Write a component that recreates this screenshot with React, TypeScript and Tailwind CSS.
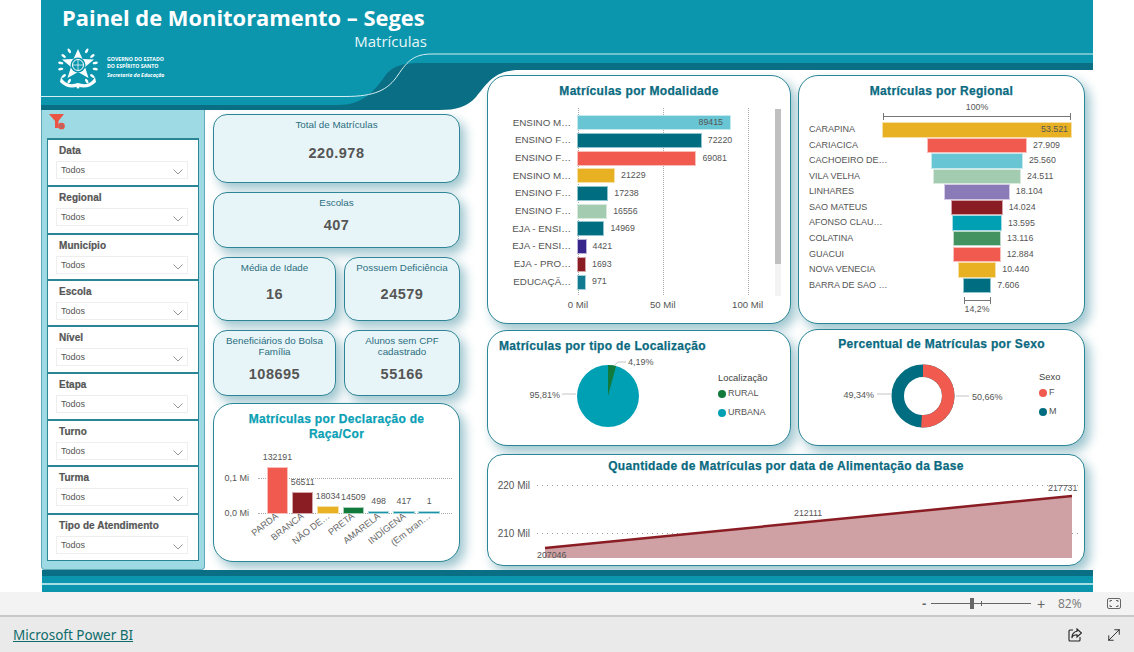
import { MoveDiagonal } from "lucide-react";

const slicers = [
  { label: "Data", height: "h-[47px]" },
  { label: "Regional", height: "h-[48px]" },
  { label: "Município", height: "h-[46px]" },
  { label: "Escola", height: "h-[46px]" },
  { label: "Nível", height: "h-[47px]" },
  { label: "Etapa", height: "h-[47px]" },
  { label: "Turno", height: "h-[46px]" },
  { label: "Turma", height: "h-[48px]" },
  { label: "Tipo de Atendimento", height: "h-[47px]" },
];

const teal = "bg-[#006d80] ring-[#8fc3cd]";
const coral = "bg-[#f05a4f] ring-[#f9c0bb]";
const gold = "bg-[#e8b124] ring-[#f6e0a6]";
const sky = "bg-[#68c5d3] ring-[#c5e9ee]";
const sage = "bg-[#a2cbaf] ring-[#d8eade]";
const wine = "bg-[#8a1c24] ring-[#d3a5a8]";

const modalidades = [
  { label: "ENSINO M…", value: 89415, color: sky, inside: true },
  { label: "ENSINO F…", value: 72220, color: teal },
  { label: "ENSINO F…", value: 69081, color: coral },
  { label: "ENSINO M…", value: 21229, color: gold },
  { label: "ENSINO F…", value: 17238, color: teal },
  { label: "ENSINO F…", value: 16556, color: sage },
  { label: "EJA - ENSI…", value: 14969, color: teal },
  { label: "EJA - ENSI…", value: 4421, color: "bg-[#38268a] ring-[#b9b2da]" },
  { label: "EJA - PRO…", value: 1693, color: wine },
  { label: "EDUCAÇÃ…", value: 971, color: "bg-[#127a90] ring-[#a5d0d9]" },
];

const regionais = [
  { label: "CARAPINA", value: 53521, text: "53.521", color: gold, inside: true },
  { label: "CARIACICA", value: 27909, text: "27.909", color: coral },
  { label: "CACHOEIRO DE…", value: 25560, text: "25.560", color: sky },
  { label: "VILA VELHA", value: 24511, text: "24.511", color: sage },
  { label: "LINHARES", value: 18104, text: "18.104", color: "bg-[#8a7ab8] ring-[#d3cde5]" },
  { label: "SAO MATEUS", value: 14024, text: "14.024", color: wine },
  { label: "AFONSO CLAU…", value: 13595, text: "13.595", color: "bg-[#00a0b4] ring-[#a6dde4]" },
  { label: "COLATINA", value: 13116, text: "13.116", color: "bg-[#439360] ring-[#bcdac7]" },
  { label: "GUACUI", value: 12884, text: "12.884", color: coral },
  { label: "NOVA VENECIA", value: 10440, text: "10.440", color: gold },
  { label: "BARRA DE SAO …", value: 7606, text: "7.606", color: teal },
];

const racas = [
  { label: "PARDA", value: 132191, height: 45, color: coral },
  { label: "BRANCA", value: 56511, height: 20, color: wine },
  { label: "NÃO DE…", value: 18034, height: 6.5, color: gold },
  { label: "PRETA", value: 14509, height: 5, color: "bg-[#127a3a] ring-[#a9d0b6]" },
  { label: "AMARELA", value: 498, height: 1, color: "bg-[#1a93a8] ring-[#a6d7df]" },
  { label: "INDÍGENA", value: 417, height: 1, color: "bg-[#1a93a8] ring-[#a6d7df]" },
  { label: "(Em bran…", value: 1, height: 1, color: "bg-[#1a93a8] ring-[#a6d7df]" },
];

const cardShadow = "shadow-[5px_6px_11px_rgba(10,111,133,0.4)]";
const titleClass = "font-bold text-[12px] leading-[16px] tracking-[0.32px] text-[#0a6a7f] [-webkit-text-stroke:0.25px_#0a6a7f]";

function Chevron() {
  return (
    <svg width="10" height="6" viewBox="0 0 10 6" className="mt-[3px]">
      <polyline points="0.5,0.5 5,5 9.5,0.5" fill="none" stroke="#8a8a8a" strokeWidth="0.9" />
    </svg>
  );
}

function Slicer({ label, height }: { label: string; height: string }) {
  return (
    <div className={`${height} border-x border-t-2 border-[#2a8595] bg-white pl-[8px] pt-[4px]`}>
      <div className="pl-[3px] text-[10px] font-bold leading-[14px] tracking-[0.05px] text-[#555] [-webkit-text-stroke:0.2px_#555]">{label}</div>
      <div className="mt-[3px] flex h-[18px] w-[132px] items-center justify-between border border-[#eeeeee] px-[4px] pt-[1px] text-[9px] text-[#555]">
        <span>Todos</span>
        <Chevron />
      </div>
    </div>
  );
}

function Kpi({ label, value, gap, className }: { label: string; value: string; gap: string; className: string }) {
  return (
    <div className={`${className} rounded-[14px] border border-[#2f8597] bg-[#e8f5f8] px-[4px] pt-[4px] text-center ${cardShadow}`}>
      <div className="text-[9.8px] leading-[11px] text-[#2b6e80]">{label}</div>
      <div className={`${gap} text-[14.5px] font-bold leading-[18px] tracking-[0.5px] text-[#555]`}>{value}</div>
    </div>
  );
}

function Bracket({ className }: { className: string }) {
  return (
    <div className={`${className} flex h-[7px] items-center border-x border-[#777]`}>
      <div className="h-px w-full bg-[#777]" />
    </div>
  );
}

function Legend({ title, items, className }: { title: string; items: { label: string; color: string }[]; className: string }) {
  return (
    <div className={`${className} text-[9px] text-[#555]`}>
      <div className="text-[9.4px] leading-[12px] text-[#444]">{title}</div>
      {items.map((item) => (
        <div key={item.label} className="flex h-[19px] items-center gap-[2px]">
          <span className={`h-[8px] w-[8px] rounded-full ${item.color}`} />
          <span>{item.label}</span>
        </div>
      ))}
    </div>
  );
}

function Logo() {
  const leaves = [-150, -125, -100, -80, -55, -30, 30, 55, 80, 100, 125, 150];
  return (
    <svg width="40" height="43" viewBox="0 0 40 43" className="shrink-0">
      <polygon
        points="20,3 24.5,13 36,13.5 27,21 30.5,32 20,26 9.5,32 13,21 4,13.5 15.500,13"
        fill="#ffffff"
      />
      <circle cx="20" cy="19" r="7.500" fill="#0b96ae" />
      <circle cx="20" cy="19" r="5.500" fill="none" stroke="#ffffff" strokeWidth="1" />
      <path d="M15,19 H25 M20,14 V24" stroke="#ffffff" strokeWidth="0.7" />
      {leaves.map((angle) => (
        <ellipse
          key={angle}
          cx="20"
          cy="2.500"
          rx="1.300"
          ry="2.600"
          fill="#ffffff"
          transform={`rotate(${angle} 20 20)`}
        />
      ))}
      <path d="M3,31 Q8,41 20,37 Q32,41 37,31 L38,36 Q30,44 20,40.500 Q10,44 2,36 Z" fill="#ffffff" />
      <circle cx="20" cy="41" r="1.500" fill="#ffffff" />
    </svg>
  );
}

export default function App() {
  return (
    <div className="flex h-[652px] w-[1134px] flex-col overflow-hidden bg-white font-['Liberation_Sans',Arial,sans-serif]">
      <div className="relative ml-[41px] flex h-[592px] w-[1052px] flex-col bg-white">
        <svg viewBox="41 0 1052 110" className="absolute left-0 top-0 h-[110px] w-[1052px]">
          <path d="M41,0 H1093 V66 H450 V105 H41 Z" fill="#0b96ae" />
          <path
            d="M41,105 L338,105 C362,105 374,92 385,76 C392,67 400,63 420,63 L1093,63 L1093,70 L520,70 C494,70 487,84 476,97 C467,107 456,110 440,110 L41,110 Z"
            fill="#0a6f85"
          />
          <path
            d="M41,96.500 L345,96.500 C375,96.500 388,90 398,75 C408,60 415,54 432,54 L1093,54"
            fill="none"
            stroke="#d5eef2"
            strokeWidth="1"
          />
        </svg>

        <div className="relative flex flex-1">
          <div className="flex w-[444px] flex-col">
            <div className="h-[110px] pl-[21px] pt-[4px]">
              <div className="w-[365px] text-right">
                <div className="whitespace-nowrap text-left font-['Open_Sans',sans-serif] text-[21.9px] font-bold leading-[28px] text-white">
                  Painel de Monitoramento – Seges
                </div>
                <div className="font-['Open_Sans',sans-serif] text-[15px] leading-[18px] text-[#e8f6f8]">Matrículas</div>
              </div>
              <div className="-ml-[4px] mt-[-4px] flex items-center gap-[9px]">
                <Logo />
                <div className="font-['Open_Sans',sans-serif] font-bold text-white">
                  <div className="text-[5.2px] leading-[7px]">GOVERNO DO ESTADO</div>
                  <div className="text-[5.2px] leading-[7px]">DO ESPÍRITO SANTO</div>
                  <div className="mt-[2px] text-[5.2px] italic leading-[7px]">Secretaria da Educação</div>
                </div>
              </div>
            </div>

            <div className="flex flex-1">
              <div className="h-[460px] w-[164px] rounded-b-[4px] border-x border-b border-[#5fa9b8] bg-[#9edae3] px-[5px]">
                <div className="h-[28px] pl-[2px] pt-[4px]">
                  <svg width="18" height="18" viewBox="0 0 18 18">
                    <polygon points="0,0 15,0 9.500,7 9.500,14 6,14 6,7" fill="#ea5445" />
                    <circle cx="12.500" cy="12" r="2.600" fill="#b06a66" stroke="#ea5445" strokeWidth="1.500" />
                  </svg>
                </div>
                <div className="border-b border-[#2a8595]">
                  {slicers.map((slicer) => (
                    <Slicer key={slicer.label} label={slicer.label} height={slicer.height} />
                  ))}
                </div>
              </div>

              <div className="ml-[8px] flex w-[247px] flex-col pt-[4px]">
                <Kpi className="h-[69px]" label="Total de Matrículas" value="220.978" gap="mt-[14px]" />
                <Kpi className="mt-[9px] h-[56px]" label="Escolas" value="407" gap="mt-[8px]" />
                <div className="mt-[9px] flex gap-[8px]">
                  <Kpi className="h-[64px] w-[123px]" label="Média de Idade" value="16" gap="mt-[12px]" />
                  <Kpi className="h-[64px] w-[116px]" label="Possuem Deficiência" value="24579" gap="mt-[12px]" />
                </div>
                <div className="mt-[9px] flex gap-[8px]">
                  <Kpi className="h-[66px] w-[123px]" label="Beneficiários do Bolsa Família" value="108695" gap="mt-[8px]" />
                  <Kpi className="h-[66px] w-[116px]" label="Alunos sem CPF cadastrado" value="55166" gap="mt-[8px]" />
                </div>

                <div className={`mt-[7px] h-[159px] rounded-[20px] border border-[#2a8595] bg-white pt-[7.500px] ${cardShadow}`}>
                  <div className="text-center text-[12px] font-bold leading-[15px] tracking-[0.32px] text-[#0a9fb5] [-webkit-text-stroke:0.25px_#0a9fb5]">
                    Matrículas por Declaração de
                    <br />
                    Raça/Cor
                  </div>
                  <div className="relative flex h-[71.500px] items-end pl-[50.800px] text-[#555]">
                    <div className="absolute inset-x-0 bottom-[30px] flex items-center">
                      <span className="w-[35px] text-right text-[9px] leading-[10px]">0,1 Mi</span>
                      <span className="ml-[9px] mr-[7px] flex-1 border-t border-dotted border-[#aaa]" />
                    </div>
                    <div className="absolute inset-x-0 -bottom-[5px] flex items-center">
                      <span className="w-[35px] text-right text-[9px] leading-[10px]">0,0 Mi</span>
                      <span className="ml-[9px] mr-[7px] flex-1 border-t border-dotted border-[#aaa]" />
                    </div>
                    {racas.map((raca) => (
                      <div key={raca.label} className="relative flex w-[25.300px] flex-col items-center">
                        <span className="mb-[5px] whitespace-nowrap text-[8.8px] leading-[12px]">{raca.value}</span>
                        <div
                          className={`relative w-[19.500px] ring-1 ${raca.color}`}
                          style={{ height: raca.height }}
                        />
                        <span className="absolute right-1/2 top-full mr-[3px] mt-[-2px] origin-top-right -rotate-[38deg] whitespace-nowrap text-[9.2px] leading-[11px] text-[#666]">
                          {raca.label}
                        </span>
                      </div>
                    ))}
                  </div>
                </div>
              </div>
            </div>
          </div>

          <div className="ml-[2px] flex flex-1 flex-col pt-[75px]">
            <div className="flex gap-[7px]">
              <div className={`h-[249px] w-[304px] rounded-[20px] border border-[#2a8595] bg-white pt-[7px] ${cardShadow}`}>
                <div className={`text-center ${titleClass}`}>Matrículas por Modalidade</div>
                <div className="relative mt-[15px]">
                  {[90, 175, 260].map((left) => (
                    <div
                      key={left}
                      className="absolute -bottom-[4px] -top-[6px] border-l border-dotted border-[#aaa]"
                      style={{ left }}
                    />
                  ))}
                  <div className="absolute -top-[5px] left-[287px] flex h-[187px] w-[6px] flex-col bg-[#f3f3f3]">
                    <div className="h-[155px] bg-[#c0c0c0]" />
                  </div>
                  {modalidades.map((row, i) => (
                    <div key={i} className="relative flex h-[17.700px] items-center text-[#555]">
                      <span className="w-[83px] whitespace-nowrap text-right text-[9.8px]">{row.label}</span>
                      <div
                        className={`relative ml-[7px] flex h-[13px] items-center justify-end pr-[7px] ring-1 ${row.color}`}
                        style={{ width: (row.value * 1.7) / 1000 }}
                      >
                        {row.inside && <span className="text-[8.8px]">{row.value}</span>}
                      </div>
                      {!row.inside && <span className="ml-[7px] text-[8.8px]">{row.value}</span>}
                    </div>
                  ))}
                </div>
                <div className="ml-[47.500px] mt-[7px] flex text-center text-[9.6px] leading-[14px] text-[#555]">
                  <span className="w-[85px]">0 Mil</span>
                  <span className="w-[85px]">50 Mil</span>
                  <span className="w-[85px]">100 Mil</span>
                </div>
              </div>

              <div className={`h-[249px] w-[287px] rounded-[20px] border border-[#2a8595] bg-white pt-[7px] text-[#555] ${cardShadow}`}>
                <div className={`text-center ${titleClass}`}>Matrículas por Regional</div>
                <div className="ml-[84px] mt-[3px] w-[188px] text-center text-[8.8px] leading-[11px]">100%</div>
                <Bracket className="ml-[84px] w-[188px]" />
                <div className="mt-[2px]">
                  {regionais.map((row) => (
                    <div key={row.label} className="flex h-[15.570px] items-center">
                      <span className="w-[84px] whitespace-nowrap pl-[10px] text-[9px]">{row.label}</span>
                      <div className="flex w-[188px] justify-center">
                        <div
                          className={`relative flex h-[13.500px] items-center justify-end pr-[3px] ring-1 ${row.color}`}
                          style={{ width: (row.value / 53521) * 188 }}
                        >
                          {row.inside ? (
                            <span className="text-[8.8px]">{row.text}</span>
                          ) : (
                            <span className="absolute left-full ml-[7px] text-[8.8px]">{row.text}</span>
                          )}
                        </div>
                      </div>
                    </div>
                  ))}
                </div>
                <Bracket className="ml-[164.500px] mt-[4px] w-[27px]" />
                <div className="ml-[84px] w-[188px] text-center text-[8.8px] leading-[11px]">14,2%</div>
              </div>
            </div>

            <div className="mt-[6px] flex items-start gap-[7px]">
              <div className={`h-[116px] w-[304px] rounded-[20px] border border-[#2a8595] bg-white pt-[7px] ${cardShadow}`}>
                <div className={`pl-[11px] ${titleClass}`}>Matrículas por tipo de Localização</div>
                <div className="flex">
                  <svg width="230" height="91" className="shrink-0 text-[#555]">
                    <circle cx="120" cy="42" r="31" fill="#00a0b4" />
                    <path d="M120,42 L120,11 A31,31 0 0 1 128.070,12.070 Z" fill="#127a3a" />
                    <polyline points="126,11.700 130,8 138,8" fill="none" stroke="#c4c4c4" />
                    <line x1="74" y1="40" x2="88" y2="40" stroke="#c4c4c4" />
                    <text x="140" y="11" fontSize="9" fill="currentColor">4,19%</text>
                    <text x="72" y="43.500" fontSize="9" textAnchor="end" fill="currentColor">95,81%</text>
                  </svg>
                  <Legend
                    className="pt-[18px]"
                    title="Localização"
                    items={[
                      { label: "RURAL", color: "bg-[#127a3a]" },
                      { label: "URBANA", color: "bg-[#00a0b4]" },
                    ]}
                  />
                </div>
              </div>

              <div className={`-mt-px h-[117px] w-[287px] rounded-[20px] border border-[#2a8595] bg-white pt-[6px] ${cardShadow}`}>
                <div className={`text-center ${titleClass}`}>Percentual de Matrículas por Sexo</div>
                <div className="flex">
                  <svg width="240" height="92" className="shrink-0 text-[#555]">
                    <circle cx="124" cy="44" r="25.250" fill="none" stroke="#006d80" strokeWidth="12.500" />
                    <circle
                      cx="124"
                      cy="44"
                      r="25.250"
                      fill="none"
                      stroke="#f05a4f"
                      strokeWidth="12.500"
                      strokeDasharray="80.370 158.650"
                      transform="rotate(-90 124 44)"
                    />
                    <line x1="78" y1="42" x2="92" y2="42" stroke="#c4c4c4" />
                    <line x1="157" y1="44" x2="170" y2="44" stroke="#c4c4c4" />
                    <text x="75" y="46" fontSize="9" textAnchor="end" fill="currentColor">49,34%</text>
                    <text x="173" y="47.500" fontSize="9" fill="currentColor">50,66%</text>
                  </svg>
                  <Legend
                    className="pt-[19px]"
                    title="Sexo"
                    items={[
                      { label: "F", color: "bg-[#f05a4f]" },
                      { label: "M", color: "bg-[#006d80]" },
                    ]}
                  />
                </div>
              </div>
            </div>

            <div className={`mt-[8px] h-[112px] w-[598px] rounded-[16px] border border-[#2a8595] bg-white pt-[3px] ${cardShadow}`}>
              <div className={`text-center ${titleClass}`}>Quantidade de Matrículas por data de Alimentação da Base</div>
              <svg width="596" height="91" className="text-[#555]">
                <line x1="49" y1="11.500" x2="590" y2="11.500" stroke="#999" strokeDasharray="1 4" />
                <line x1="49" y1="59.500" x2="590" y2="59.500" stroke="#999" strokeDasharray="1 4" />
                <path d="M57,74 L584,22 L584,84 L57,84 Z" fill="#cfa1a4" />
                <line x1="57" y1="74" x2="584" y2="22" stroke="#8a1c24" strokeWidth="2.500" />
                <text x="42" y="15" fontSize="10" textAnchor="end" fill="currentColor">220 Mil</text>
                <text x="42" y="63" fontSize="10" textAnchor="end" fill="currentColor">210 Mil</text>
                <text x="49" y="84" fontSize="8.8" fill="currentColor">207046</text>
                <text x="306" y="42" fontSize="8.8" fill="currentColor">212111</text>
                <text x="560" y="17" fontSize="8.8" fill="currentColor">217731</text>
              </svg>
            </div>
          </div>
        </div>

        <div className="relative ml-px h-[22px] shrink-0 bg-[#0b96ae]">
          <div className="h-[6px] bg-[#0a6f85]" />
          <div className="mt-[7px] h-[2px] bg-[#a8dde5]" />
        </div>
      </div>

      <div className="flex h-[23px] items-center bg-[#f3f3f3] pl-[922px] text-[#666]">
        <span className="w-[9px] text-[13px] font-bold leading-none">-</span>
        <div className="relative h-px w-[100px] bg-[#666]">
          <div className="absolute -top-[5px] left-[39px] h-[11px] w-[4px] bg-[#666]" />
          <div className="absolute -top-[2px] left-[50px] h-[5px] w-px bg-[#666]" />
        </div>
        <span className="ml-[5px] w-[10px] text-center text-[14px] leading-none">+</span>
        <span className="ml-[12px] font-['Open_Sans',sans-serif] text-[12px] leading-none text-[#777]">82%</span>
        <svg width="14" height="11" viewBox="0 0 14 11" className="ml-[25px]">
          <rect x="0.500" y="0.500" width="13" height="10" rx="1.500" fill="none" stroke="#666" />
          <path d="M3,4 V2.500 H5 M9,2.500 H11 V4 M3,7 V8.500 H5 M9,8.500 H11 V7" fill="none" stroke="#666" />
        </svg>
      </div>

      <div className="flex flex-1 items-center border-t-2 border-[#c8c8c8] bg-[#eaeaea] pl-[13px] pr-[11px]">
        <a className="pt-[3px] font-['Noto_Sans',sans-serif] text-[13.5px] leading-none text-[#0f6c6c] underline">Microsoft Power BI</a>
        <svg width="14" height="14" viewBox="0 0 14 14" className="ml-auto">
          <path d="M5,2 H2 A1,1 0 0 0 1,3 V12 A1,1 0 0 0 2,13 H11 A1,1 0 0 0 12,12 V9" fill="none" stroke="#222" strokeWidth="1.100" />
          <path d="M9,1 L13.500,5 L9,9 V6.800 C6,6.800 4.500,8 3.800,10 C3.800,6.500 6,3.500 9,3.300 Z" fill="none" stroke="#222" strokeWidth="1.100" />
        </svg>
        <MoveDiagonal size={18} strokeWidth={1.2} className="ml-[23px] text-[#222]" />
      </div>
    </div>
  );
}
